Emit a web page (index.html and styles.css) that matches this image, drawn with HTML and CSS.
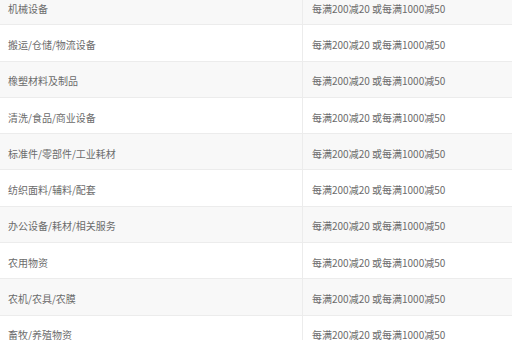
FILE: index.html
```html
<!DOCTYPE html>
<html lang="zh-CN">
<head>
<meta charset="utf-8">
<link rel="stylesheet" href="styles.css">
</head>
<body>
<div class="table">
  <div class="row"><div class="cell cat">机械设备</div><div class="cell rule">每满200减20 或每满1000减50</div></div>
  <div class="row"><div class="cell cat">搬运/仓储/物流设备</div><div class="cell rule">每满200减20 或每满1000减50</div></div>
  <div class="row"><div class="cell cat">橡塑材料及制品</div><div class="cell rule">每满200减20 或每满1000减50</div></div>
  <div class="row"><div class="cell cat">清洗/食品/商业设备</div><div class="cell rule">每满200减20 或每满1000减50</div></div>
  <div class="row"><div class="cell cat">标准件/零部件/工业耗材</div><div class="cell rule">每满200减20 或每满1000减50</div></div>
  <div class="row"><div class="cell cat">纺织面料/辅料/配套</div><div class="cell rule">每满200减20 或每满1000减50</div></div>
  <div class="row"><div class="cell cat">办公设备/耗材/相关服务</div><div class="cell rule">每满200减20 或每满1000减50</div></div>
  <div class="row"><div class="cell cat">农用物资</div><div class="cell rule">每满200减20 或每满1000减50</div></div>
  <div class="row"><div class="cell cat">农机/农具/农膜</div><div class="cell rule">每满200减20 或每满1000减50</div></div>
  <div class="row"><div class="cell cat">畜牧/养殖物资</div><div class="cell rule">每满200减20 或每满1000减50</div></div>
</div>
</body>
</html>
```
FILE: styles.css
```css
html, body {
  margin: 0;
  padding: 0;
  background: #ffffff;
}
body {
  font-family: "Noto Sans CJK SC", "Noto Sans", sans-serif;
  font-size: 10px;
  color: #6b6b6b;
  overflow: hidden;
}
.table {
  margin-top: -11px;
}
.row {
  display: grid;
  grid-template-columns: 303px 1fr;
  height: 36.3px;
  box-sizing: border-box;
  border-bottom: 1px solid #ececec;
  background: #ffffff;
}
.row:nth-child(odd) {
  background: #f8f8f8;
}
.cell {
  display: flex;
  align-items: center;
  padding: 3px 8px 0 8px;
  white-space: nowrap;
}
.cat {
  border-right: 1px solid #ececec;
}
.rule {
  padding-left: 9px;
}
```
